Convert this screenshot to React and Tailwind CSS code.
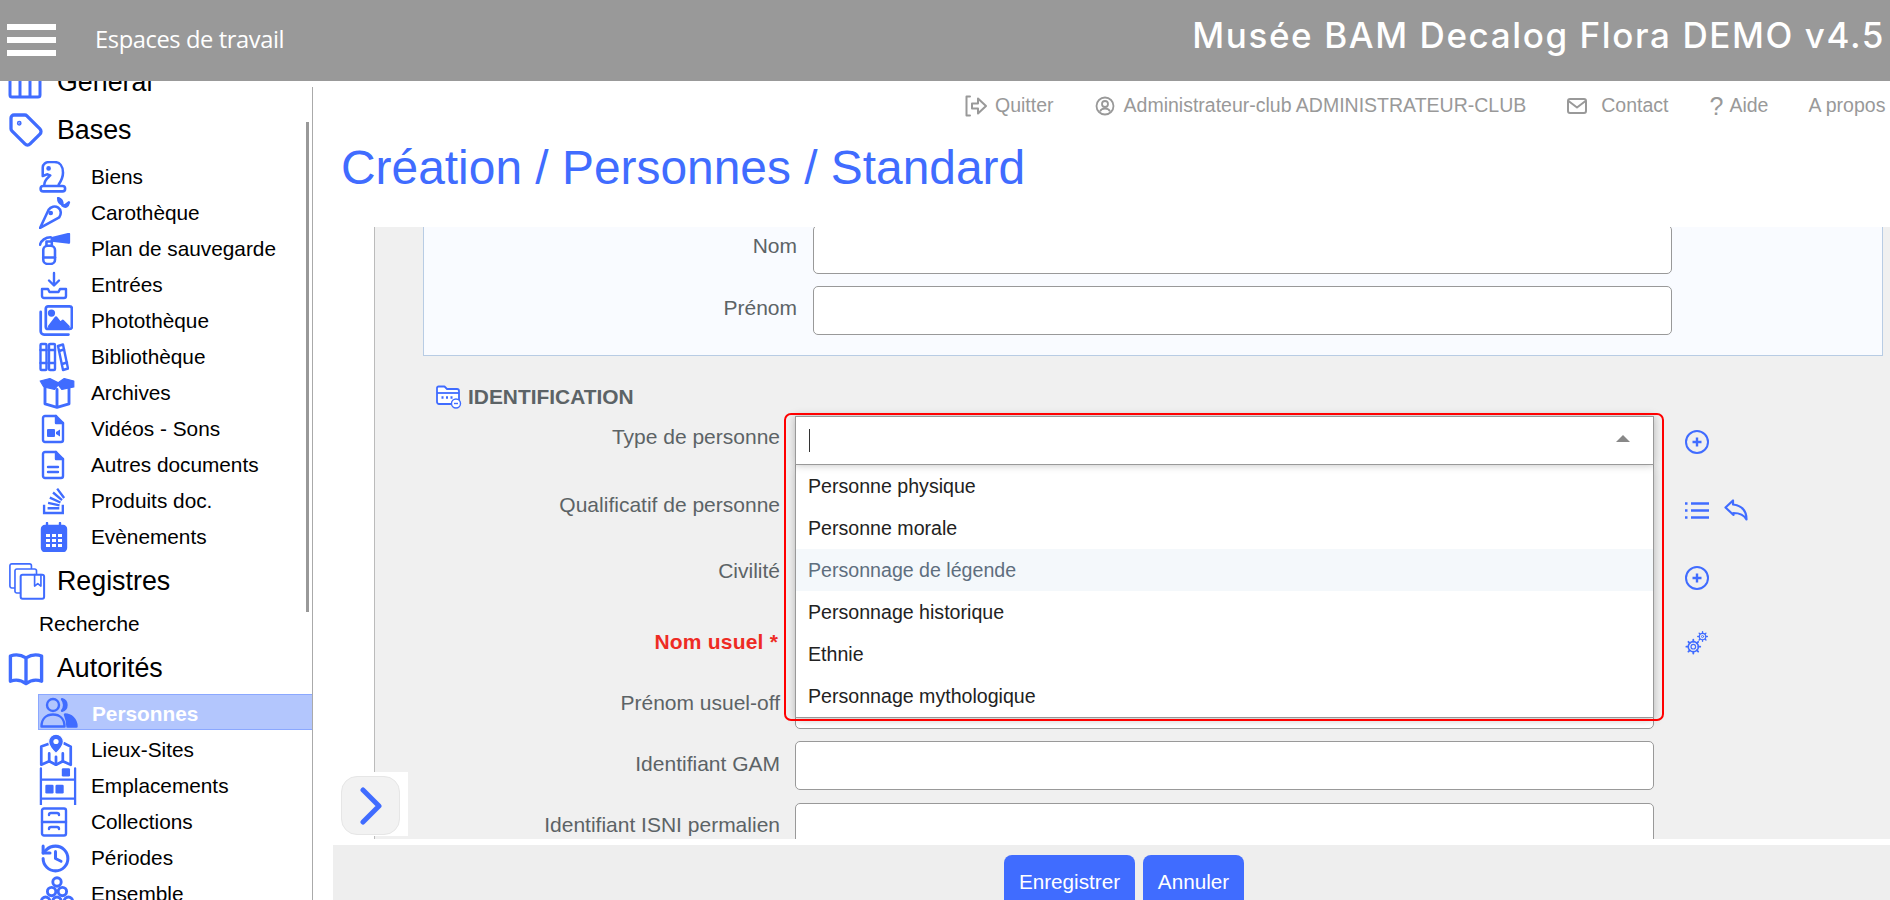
import { History, Tag } from 'lucide-react'
import { FaStackOverflow } from 'react-icons/fa'

const Svg = ({ size = 30, children, className = '' }) => (
  <svg
    width={size}
    height={size}
    viewBox="0 0 30 30"
    fill="none"
    stroke="currentColor"
    strokeWidth="2.4"
    strokeLinecap="round"
    strokeLinejoin="round"
    className={className}
  >
    {children}
  </svg>
)

const IconKnight = () => (
  <Svg size={32}>
    <path d="M5 22c0-4 3-6 5.500-8.500l-3-1-4 1.500V6c0-3 3-5 6-5h5c5 0 8 4 8 10 0 5-2 8-4 11" />
    <circle cx="9" cy="7" r="1" fill="currentColor" />
    <rect x="1.500" y="23.500" width="23" height="5" rx="2.500" />
  </Svg>
)

const IconCarrot = () => (
  <Svg size={32}>
    <path d="M1 29L9 12c2-3 6-4 9-2s3 6 1 9z" />
    <circle cx="11" cy="15" r="1" fill="currentColor" />
    <path d="M18 1c3 1 4 3 4 6-3-1-4-3-4-6z" fill="currentColor" />
    <path d="M22 8c2 0 4-1 6-3-1 4-3 5-6 3z" fill="currentColor" />
  </Svg>
)

const IconExtinguisher = () => (
  <Svg size={32}>
    <rect x="4" y="12" width="11" height="17" rx="4" />
    <path d="M4 23h11" />
    <path d="M1 11c1-4 5-7 10-7" />
    <path d="M7 12V8h5v4" />
    <path d="M12 5l16-4v8L12 7z" fill="currentColor" />
  </Svg>
)

const IconInbox = () => (
  <Svg>
    <path d="M15 3v12M10 10.500l5 5 5-5" />
    <path d="M3 19h6l1.500 3h9l1.500-3h6v7a2 2 0 0 1-2 2H5a2 2 0 0 1-2-2z" />
  </Svg>
)

const IconPhotos = () => (
  <Svg size={34}>
    <rect x="6" y="2" width="23" height="20" rx="2" />
    <path d="M1.500 7v17a3 3 0 0 0 3 3H26" />
    <path d="M9 20l6-8 4 5 2-2 5 5z" fill="currentColor" />
    <circle cx="11" cy="8" r="2" fill="currentColor" />
  </Svg>
)

const IconBooks = () => (
  <Svg>
    <rect x="1.500" y="2" width="6" height="26" rx="1" />
    <rect x="10" y="2" width="6" height="26" rx="1" />
    <path d="M19 4l5-1.500 5 24-5 1.500z" />
    <path d="M1.500 8h6M1.500 21h6M10 8h6M10 21h6M20 9l5-1.500M23 22l5-1.500" />
  </Svg>
)

const IconBox = () => (
  <Svg size={36}>
    <path d="M1 5l8-2 8 4-4 5-9-2z" fill="currentColor" strokeWidth="1" />
    <path d="M29 5l-8-2-6 4 4 5 10-2z" fill="currentColor" strokeWidth="1" />
    <path d="M5 11v13l10 3 10-3V11M15 12v15" />
  </Svg>
)

const IconFileVideo = () => (
  <Svg>
    <path d="M4 4a2 2 0 0 1 2-2h11l7 7v17a2 2 0 0 1-2 2H6a2 2 0 0 1-2-2z" />
    <path d="M17 2v7h7" fill="currentColor" />
    <rect x="8" y="15" width="8" height="8" rx="1" fill="currentColor" stroke="none" />
    <path d="M17 18l4-2.500v7L17 20z" fill="currentColor" stroke="none" />
  </Svg>
)

const IconFile = () => (
  <Svg>
    <path d="M4 4a2 2 0 0 1 2-2h11l7 7v17a2 2 0 0 1-2 2H6a2 2 0 0 1-2-2z" />
    <path d="M17 2v7h7" fill="currentColor" />
    <path d="M9 17h10M9 22h10" />
  </Svg>
)

const IconCalendar = () => (
  <Svg>
    <path d="M8 1v5M21 1v5" />
    <rect x="3" y="4" width="24" height="25" rx="3" fill="currentColor" />
    <path
      d="M7 12h4v3H7zM13 12h4v3h-4zM19 12h4v3h-4zM7 17h4v3H7zM13 17h4v3h-4zM19 17h4v3h-4zM7 22h4v3H7zM13 22h4v3h-4zM19 22h4v3h-4z"
      fill="#fff"
      stroke="none"
    />
  </Svg>
)

const IconRegister = () => (
  <Svg size={38}>
    <rect x="1.500" y="1.500" width="17" height="19" rx="1.500" strokeWidth="1.300" />
    <rect x="5.500" y="5.500" width="17" height="19" rx="1.500" strokeWidth="1.300" fill="#fff" />
    <rect x="10" y="10" width="18.500" height="19" rx="1.500" strokeWidth="1.600" fill="#fff" />
    <path d="M21 10v9l2.500-2 2.500 2v-9" strokeWidth="1.300" />
  </Svg>
)

const IconBook = () => (
  <Svg size={36}>
    <path d="M15 6.500C11 4 6 3.500 2 5v21c4-1.500 9-1 13 2 4-3 9-3.500 13-2V5c-4-1.500-9-1-13 1.500zM15 6.500V28" strokeWidth="2.800" />
  </Svg>
)

const IconPeople = () => (
  <svg width="38" height="31" viewBox="0 0 38 31" fill="none" stroke="currentColor" strokeWidth="2.400" strokeLinejoin="round">
    <circle cx="13" cy="8" r="6" />
    <path d="M22 2.200a6 6 0 0 1 0 11.600 9 9 0 0 0 0-11.600z" fill="currentColor" />
    <path d="M1.500 29.500c0-8 5-12 11.500-12s11.500 4 11.500 12z" />
    <path d="M25 17.500c6 0 11.500 5 11.500 12H27.500c0-4-1-8-2.500-12z" fill="currentColor" />
  </svg>
)

const IconMap = () => (
  <Svg size={34}>
    <path d="M10 9L2 12v16l7-3 6 3 6-3 7 3V12l-6-3" />
    <path d="M9 25v-7M15 21v7M21 18v7" />
    <path d="M15 1a6.500 6.500 0 0 0-6.500 6.500C8.500 12 15 18 15 18s6.500-6 6.500-10.500A6.500 6.500 0 0 0 15 1z" fill="currentColor" stroke="#fff" strokeWidth="1" />
    <circle cx="15" cy="7.500" r="2.300" fill="#fff" stroke="none" />
  </Svg>
)

const IconShelf = () => (
  <Svg size={38}>
    <path d="M1.500 1v29M28.500 1v29M1.500 10h27M1.500 25h27" strokeWidth="1.800" />
    <rect x="18" y="1" width="6.500" height="6.500" rx="1" fill="currentColor" stroke="none" />
    <rect x="5" y="14" width="6.500" height="7" rx="1" fill="currentColor" stroke="none" />
    <rect x="13" y="14" width="6.500" height="7" rx="1" fill="currentColor" stroke="none" />
  </Svg>
)

const IconCabinet = () => (
  <Svg>
    <rect x="3" y="1.500" width="24" height="27" rx="2" />
    <path d="M3 15h24M10 8c0-1.500 1-2 2-2h6c1 0 2 .5 2 2M10 22c0-1.500 1-2 2-2h6c1 0 2 .5 2 2" />
  </Svg>
)

const IconEnsemble = () => (
  <Svg size={36}>
    <circle cx="15" cy="5" r="3.500" />
    <circle cx="10.500" cy="13" r="3.500" />
    <circle cx="19.500" cy="13" r="3.500" />
    <circle cx="5.500" cy="21" r="3.500" />
    <circle cx="15" cy="21" r="3.500" />
    <circle cx="24.500" cy="21" r="3.500" />
  </Svg>
)

const IconGeneral = () => (
  <svg width="34" height="34" viewBox="0 0 34 34" fill="none" stroke="currentColor" strokeWidth="3" strokeLinejoin="round">
    <path d="M2 8v22a2 2 0 0 0 2 2h26a2 2 0 0 0 2-2V8M12 8v23M22 8v23M2 4h30" />
  </svg>
)

const IconFolder = () => (
  <svg width="26" height="24" viewBox="0 0 26 24" fill="none" stroke="currentColor" strokeWidth="1.800" strokeLinejoin="round">
    <path d="M1 3a1.500 1.500 0 0 1 1.500-1.500h6L11 4h10a2 2 0 0 1 2 2v11a2 2 0 0 1-2 2H3a2 2 0 0 1-2-2z" fill="#fff" />
    <path d="M1 8h22" />
    <path d="M5.500 12.500h2M10 12.500h2M14.500 12.500h2" strokeWidth="2.400" />
    <circle cx="20" cy="18.500" r="4.500" fill="#fff" strokeWidth="1.400" />
    <path d="M18 18.500h4" strokeWidth="1.400" />
  </svg>
)

const IconPlus = () => (
  <svg width="24" height="24" viewBox="0 0 24 24" fill="none" stroke="currentColor" strokeWidth="2">
    <circle cx="12" cy="12" r="11" />
    <path d="M12 7.500v9M7.500 12h9" strokeWidth="2.400" />
  </svg>
)

const IconList = () => (
  <svg width="24" height="17" viewBox="0 0 24 17" fill="none" stroke="currentColor" strokeWidth="2.400">
    <path d="M6 1.500h18M6 8.500h18M6 15.500h18" />
    <path d="M0 1.500h2.500M0 8.500h2.500M0 15.500h2.500" />
  </svg>
)

const IconReply = () => (
  <svg width="24" height="22" viewBox="0 0 24 22" fill="none" stroke="currentColor" strokeWidth="2.200" strokeLinejoin="round">
    <path d="M1.500 8.500L9 1.500V5.500C17 6.500 22.500 11 22.500 20.500 20 16 15.500 14 9.500 14V16z" />
  </svg>
)

const IconGears = () => (
  <svg width="24" height="24" viewBox="0 0 26 26" fill="none" stroke="currentColor" strokeLinecap="round">
    <circle cx="9" cy="17" r="5.500" strokeWidth="1.700" />
    <circle cx="9" cy="17" r="2.500" strokeWidth="1.300" />
    <path d="M9 9.500v2M9 22.500v2M1.500 17h2M14.500 17h2M3.700 11.700l1.400 1.400M12.900 20.900l1.400 1.400M3.700 22.300l1.400-1.400M12.900 13.100l1.400-1.400" strokeWidth="2" />
    <circle cx="19" cy="6" r="3.500" strokeWidth="1.300" />
    <circle cx="19" cy="6" r="1.200" strokeWidth="1" />
    <path d="M19 .8v1M19 10.200v1M13.800 6h1M23.200 6h1M15.300 2.300l.7.7M22 9l.7.7M15.300 9.700l.7-.7M22 3l.7-.7" strokeWidth="1.500" />
  </svg>
)

const IconExit = () => (
  <svg width="24" height="22" viewBox="0 0 24 22" fill="none" stroke="currentColor" strokeWidth="2" strokeLinecap="round" strokeLinejoin="round">
    <path d="M6 1.500H2.500v19H6" />
    <path d="M8 8.500H14V3.500l8 7.500-8 7.500v-5H8z" />
  </svg>
)

const IconUser = () => (
  <svg width="20" height="20" viewBox="0 0 20 20" fill="none" stroke="currentColor" strokeWidth="1.800">
    <circle cx="10" cy="10" r="8.500" />
    <circle cx="10" cy="8" r="3" />
    <path d="M5 15.500c1-2.500 3-3 5-3s4 .5 5 3" />
  </svg>
)

const IconMail = () => (
  <svg width="20" height="16" viewBox="0 0 20 16" fill="none" stroke="currentColor" strokeWidth="2" strokeLinejoin="round">
    <rect x="1" y="1" width="18" height="14" rx="2" />
    <path d="M1.500 3L10 9.500 18.500 3" />
  </svg>
)

const bases = [
  ['Biens', <IconKnight />],
  ['Carothèque', <IconCarrot />],
  ['Plan de sauvegarde', <IconExtinguisher />],
  ['Entrées', <IconInbox />],
  ['Photothèque', <IconPhotos />],
  ['Bibliothèque', <IconBooks />],
  ['Archives', <IconBox />],
  ['Vidéos - Sons', <IconFileVideo />],
  ['Autres documents', <IconFile />],
  ['Produits doc.', <FaStackOverflow size={30} />],
  ['Evènements', <IconCalendar />],
]

const autorites = [
  ['Lieux-Sites', <IconMap />],
  ['Emplacements', <IconShelf />],
  ['Collections', <IconCabinet />],
  ['Périodes', <History size={33} strokeWidth={2.2} />],
  ['Ensemble', <IconEnsemble />],
]

const options = [
  'Personne physique',
  'Personne morale',
  'Personnage de légende',
  'Personnage historique',
  'Ethnie',
  'Personnage mythologique',
]

const GroupRow = ({ icon, label, className }) => (
  <div className={`flex items-center h-[48px] pl-[8px] ${className}`}>
    <span className="w-[49px] flex items-center text-[#406cff]">{icon}</span>
    <span className="text-[26.8px] text-black">{label}</span>
  </div>
)

const ItemRow = ({ icon, label }) => (
  <div className="flex items-center h-[36px] pl-[39px]">
    <span className="w-[52px] h-[36px] flex items-center text-[#406cff]">{icon}</span>
    <span className="text-[20.8px] text-black">{label}</span>
  </div>
)

const Sidebar = () => (
  <aside className="relative w-[313px] shrink-0 overflow-hidden">
    <div className="-mt-[23px]">
      <GroupRow icon={<IconGeneral />} label="Général" className="" />
      <GroupRow icon={<Tag size={36} strokeWidth={2.2} />} label="Bases" className="mb-[5px]" />
      {bases.map(([label, icon]) => (
        <ItemRow key={label} label={label} icon={icon} />
      ))}
      <GroupRow icon={<IconRegister />} label="Registres" className="mt-[2px] mb-[1px]" />
      <div className="h-[36px] pl-[39px] flex items-center text-[20.8px] text-black">Recherche</div>
      <GroupRow icon={<IconBook />} label="Autorités" className="mt-[2px] mb-[2px]" />
      <div className="ml-[38px] h-[36px] mb-[2px] flex items-center pl-[1px] bg-[#b3c6fd] border border-[#8ba8ff] border-r-0">
        <span className="w-[52px] flex items-center text-[#406cff]"><IconPeople /></span>
        <span className="text-[20.8px] font-bold text-white pt-[3px]">Personnes</span>
      </div>
      {autorites.map(([label, icon]) => (
        <ItemRow key={label} label={label} icon={icon} />
      ))}
    </div>
    {/* scrollbar + bordure */}
    <div className="absolute left-[306px] top-[41px] w-[3px] h-[490px] bg-[#999]"></div>
    <div className="absolute right-0 top-[6px] bottom-0 w-px bg-[#aaa]"></div>
  </aside>
)

const TopNav = () => (
  <nav className="h-[48px] pt-[2px] shrink-0 flex items-center whitespace-nowrap text-[19.5px] text-[#999] pl-[651px]">
    <span className="flex items-center gap-[7px]"><IconExit />Quitter</span>
    <span className="flex items-center gap-[9px] ml-[41px]"><IconUser />Administrateur-club ADMINISTRATEUR-CLUB</span>
    <span className="flex items-center gap-[14px] ml-[41px]"><IconMail />Contact</span>
    <span className="flex items-center gap-[6px] ml-[41px]"><span className="text-[25px] leading-none font-light">?</span>Aide</span>
    <span className="ml-[40px]">A propos</span>
  </nav>
)

const Input = ({ className = '' }) => (
  <div className={`h-[49px] bg-white border border-[#999] rounded-[5px] ${className}`}></div>
)

const Label = ({ children, className = '' }) => (
  <label className={`block text-right text-[21px] leading-[24px] text-[#5c6366] ${className}`}>{children}</label>
)

const Dropdown = () => (
  <div className="absolute left-0 top-0 w-[859px] z-10">
    <div className="relative h-[49px] bg-white border border-[#999] shadow-[0_0_8px_rgba(0,0,0,0.25)]">
      <span className="absolute left-[13px] top-[12px] w-px h-[23px] bg-[#333]"></span>
      <span className="absolute right-[23px] top-[18px] w-0 h-0 border-x-[7px] border-x-transparent border-b-[7px] border-b-[#888]"></span>
    </div>
    <ul className="bg-white border-x border-b border-[#999] shadow-[0_2px_8px_rgba(0,0,0,0.25)] text-[19.6px] text-[#222]">
      {options.map((o) => (
        <li
          key={o}
          className={
            o === 'Personnage de légende'
              ? 'h-[42px] flex items-center pl-[12px] pt-[1px] bg-[#f4f8fb] text-[#5e6e7e]'
              : 'h-[42px] flex items-center pl-[12px] pt-[1px]'
          }
        >
          {o}
        </li>
      ))}
    </ul>
    {/* cadre rouge d'annotation */}
    <div className="absolute -left-[11px] -top-[3px] w-[880px] h-[308px] border-2 border-[#ff0000] rounded-[7px] pointer-events-none"></div>
  </div>
)

const Form = () => (
  <div className="grid grid-cols-[405px_859px_auto] gap-x-[15px] mt-[7px]">
    <div className="h-[70px]"><Label className="pt-[9px]">Type de personne</Label></div>
    <div className="relative h-[70px]"><Dropdown /></div>
    <div className="h-[70px] pt-[14px] pl-[16px] text-[#406cff]"><IconPlus /></div>

    <div className="h-[68px]"><Label className="pt-[7px]">Qualificatif de personne</Label></div>
    <Input />
    <div className="h-[48px] pl-[16px] flex items-center gap-[15px] text-[#406cff]">
      <IconList />
      <IconReply />
    </div>

    <div className="h-[64px]"><Label className="pt-[5px]">Civilité</Label></div>
    <Input />
    <div className="h-[64px] pt-[12px] pl-[16px] text-[#406cff]"><IconPlus /></div>

    <div className="h-[62px]"><Label className="pt-[12px] pr-[2px] text-[#ee2b24] font-bold tracking-[0.2px]">Nom usuel<span className="ml-[6px]">*</span></Label></div>
    <Input />
    <div className="h-[62px] pt-[13px] pl-[16px] text-[#406cff]"><IconGears /></div>

    <div className="h-[61px]"><Label className="pt-[11px]">Prénom usuel-off</Label></div>
    <Input />
    <div></div>

    <div className="h-[62px]"><Label className="pt-[11px]">Identifiant GAM</Label></div>
    <Input />
    <div></div>

    <div className="h-[62px]"><Label className="pt-[10px]">Identifiant ISNI permalien</Label></div>
    <Input />
    <div></div>
  </div>
)

const App = () => (
  <div className="w-[1890px] h-[900px] overflow-hidden flex flex-col bg-white font-['Liberation_Sans',Arial,sans-serif]">
    <header className="h-[81px] shrink-0 bg-[#999] flex items-center justify-between text-white pl-[7px] pr-[5px] whitespace-nowrap">
      <div className="flex items-center">
        <div className="flex flex-col gap-[7px] w-[49px]">
          <span className="h-[6px] bg-white"></span>
          <span className="h-[6px] bg-white"></span>
          <span className="h-[6px] bg-white"></span>
        </div>
        <span className="ml-[39px] text-[23.7px] font-['Open_Sans',sans-serif] tracking-[-0.4px] -mt-[1px]">Espaces de travail</span>
      </div>
      <span className="text-[35px] font-medium font-['Inter',sans-serif] tracking-[1.6px] -mt-[11px]">Musée BAM Decalog Flora DEMO v4.5</span>
    </header>

    <div className="flex flex-1 min-h-0">
      <Sidebar />
      <main className="flex-1 min-w-0 flex flex-col relative">
        <TopNav />
        <h1 className="h-[98px] shrink-0 pl-[28px] text-[47.9px] leading-[78px] text-[#406cff] whitespace-nowrap">Création / Personnes / Standard</h1>

        <section className="ml-[61px] h-[612px] shrink-0 bg-[#f0f0f0] border-l border-[#bbb] overflow-hidden">
          <fieldset className="ml-[48px] w-[1460px] -mt-[2px] pb-[20px] bg-[#f9fbff] border-x border-b border-[#b8cce4]">
            <div className="grid grid-cols-[373px_859px] gap-x-[16px] gap-y-[12px]">
              <Label className="pt-[9px]">Nom</Label>
              <Input />
              <Label className="pt-[10px]">Prénom</Label>
              <Input />
            </div>
          </fieldset>

          <div className="flex items-center h-[24px] mt-[29px] ml-[61px] text-[#406cff]">
            <IconFolder />
            <span className="ml-[6px] text-[20.9px] font-bold text-[#5c6366]">IDENTIFICATION</span>
          </div>

          <Form />
        </section>

        <div className="h-[6px] shrink-0"></div>

        <div className="ml-[20px] flex-1 bg-[#eee] flex gap-[8px] pl-[671px] pt-[10px]">
          <button className="w-[131px] h-[60px] bg-[#406cff] text-white text-[20.7px] rounded-[8px] pb-[6px]">Enregistrer</button>
          <button className="w-[101px] h-[60px] bg-[#406cff] text-white text-[20.7px] rounded-[8px] pb-[6px]">Annuler</button>
        </div>

        {/* bouton d'ouverture du panneau */}
        <div className="absolute left-[28px] top-[691px] w-[67px] h-[64px] bg-white">
          <div className="w-[59px] h-[59px] mt-[4px] bg-[#f2f2f2] border border-[#e6e6e6] rounded-[16px] flex items-center justify-center">
            <svg width="24" height="38" viewBox="0 0 24 38" fill="none" stroke="#406cff" strokeWidth="5" strokeLinecap="round" strokeLinejoin="round">
              <path d="M4 3l16 16L4 35" />
            </svg>
          </div>
        </div>
      </main>
    </div>
  </div>
)

export default App
